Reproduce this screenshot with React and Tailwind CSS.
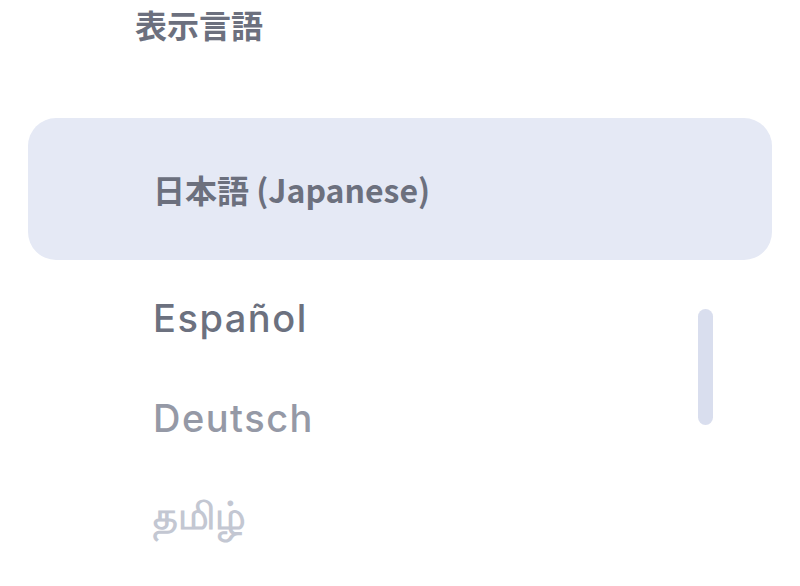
export default function App() {
  return (
    <div className="relative w-[800px] h-[586px] overflow-hidden bg-white font-['Noto_Sans','Noto_Sans_CJK_JP',sans-serif]">
      <div className="pl-[135px] h-[48px] flex items-center text-[32px] font-bold text-[#6c707e] leading-none font-['Noto_Sans_CJK_JP',sans-serif]">
        表示言語
      </div>
      <div className="mt-[70px] mx-[28px] flex flex-col">
        <div className="h-[142px] rounded-[28px] bg-[#e5e9f5] flex items-center pl-[125px] text-[32px] font-bold text-[#6c707e] leading-none font-['Noto_Sans_CJK_JP',sans-serif]">
          日本語 (Japanese)
        </div>
        <div className="mt-[8px] h-[100px] flex items-center pl-[125px] text-[38px] font-medium tracking-[1.5px] text-[#6c717f] leading-none font-['Inter',sans-serif]">
          Español
        </div>
        <div className="h-[100px] flex items-center pl-[125px] text-[38px] font-medium tracking-[1.5px] text-[#9599a6] leading-none font-['Inter',sans-serif]">
          Deutsch
        </div>
        <div className="h-[100px] flex items-center pl-[125px] pb-[8px] text-[38px] font-bold text-[#c3c7d2] leading-none font-['Open_Sans',sans-serif]">
          தமிழ்
        </div>
      </div>
      <div className="absolute left-[698px] top-[309px] w-[15px] h-[116px] rounded-full bg-[#d9deee]" />
    </div>
  );
}
